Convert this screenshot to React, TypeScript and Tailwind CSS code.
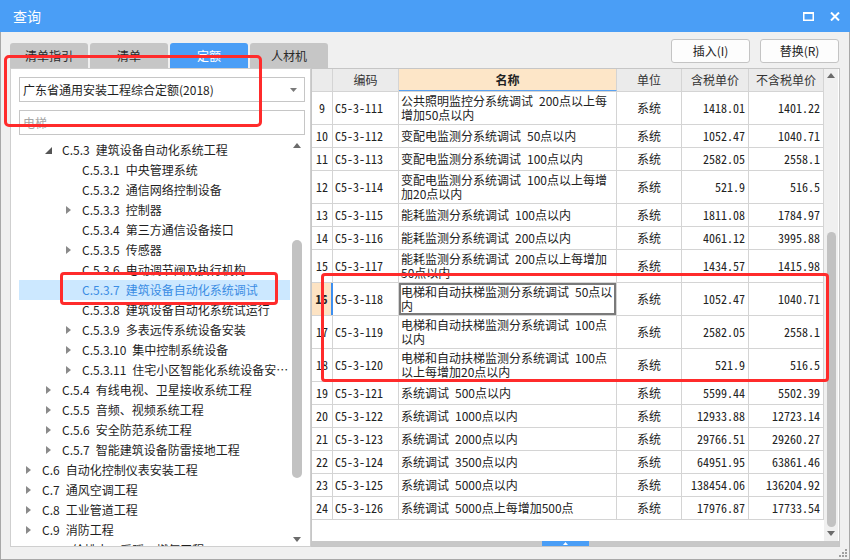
import React from "react";

type Row = {
  n: number;
  code: string;
  name: string[];
  tax: string;
  net: string;
  active?: boolean;
};

const ROWS: Row[] = [
  { n: 9, code: "C5-3-111", name: ["公共照明监控分系统调试 200点以上每", "增加50点以内"], tax: "1418.01", net: "1401.22" },
  { n: 10, code: "C5-3-112", name: ["变配电监测分系统调试 50点以内"], tax: "1052.47", net: "1040.71" },
  { n: 11, code: "C5-3-113", name: ["变配电监测分系统调试 100点以内"], tax: "2582.05", net: "2558.1" },
  { n: 12, code: "C5-3-114", name: ["变配电监测分系统调试 100点以上每增", "加20点以内"], tax: "521.9", net: "516.5" },
  { n: 13, code: "C5-3-115", name: ["能耗监测分系统调试 100点以内"], tax: "1811.08", net: "1784.97" },
  { n: 14, code: "C5-3-116", name: ["能耗监测分系统调试 200点以内"], tax: "4061.12", net: "3995.88" },
  { n: 15, code: "C5-3-117", name: ["能耗监测分系统调试 200点以上每增加", "50点以内"], tax: "1434.57", net: "1415.98" },
  { n: 16, code: "C5-3-118", name: ["电梯和自动扶梯监测分系统调试 50点以", "内"], tax: "1052.47", net: "1040.71", active: true },
  { n: 17, code: "C5-3-119", name: ["电梯和自动扶梯监测分系统调试 100点", "以内"], tax: "2582.05", net: "2558.1" },
  { n: 18, code: "C5-3-120", name: ["电梯和自动扶梯监测分系统调试 100点", "以上每增加20点以内"], tax: "521.9", net: "516.5" },
  { n: 19, code: "C5-3-121", name: ["系统调试 500点以内"], tax: "5599.44", net: "5502.39" },
  { n: 20, code: "C5-3-122", name: ["系统调试 1000点以内"], tax: "12933.88", net: "12723.14" },
  { n: 21, code: "C5-3-123", name: ["系统调试 2000点以内"], tax: "29766.51", net: "29260.27" },
  { n: 22, code: "C5-3-124", name: ["系统调试 3500点以内"], tax: "64951.95", net: "63861.46" },
  { n: 23, code: "C5-3-125", name: ["系统调试 5000点以内"], tax: "138454.06", net: "136204.92" },
  { n: 24, code: "C5-3-126", name: ["系统调试 5000点上每增加500点"], tax: "17976.87", net: "17733.54" },
];

// level: 1..3, arrow: none | closed | open
const TREE: { level: number; arrow: "none" | "closed" | "open"; no: string; text: string; selected?: boolean }[] = [
  { level: 2, arrow: "open", no: "C.5.3", text: "建筑设备自动化系统工程" },
  { level: 3, arrow: "none", no: "C.5.3.1", text: "中央管理系统" },
  { level: 3, arrow: "none", no: "C.5.3.2", text: "通信网络控制设备" },
  { level: 3, arrow: "closed", no: "C.5.3.3", text: "控制器" },
  { level: 3, arrow: "none", no: "C.5.3.4", text: "第三方通信设备接口" },
  { level: 3, arrow: "closed", no: "C.5.3.5", text: "传感器" },
  { level: 3, arrow: "none", no: "C.5.3.6", text: "电动调节阀及执行机构" },
  { level: 3, arrow: "none", no: "C.5.3.7", text: "建筑设备自动化系统调试", selected: true },
  { level: 3, arrow: "none", no: "C.5.3.8", text: "建筑设备自动化系统试运行" },
  { level: 3, arrow: "closed", no: "C.5.3.9", text: "多表远传系统设备安装" },
  { level: 3, arrow: "closed", no: "C.5.3.10", text: "集中控制系统设备" },
  { level: 3, arrow: "closed", no: "C.5.3.11", text: "住宅小区智能化系统设备安装工程" },
  { level: 2, arrow: "closed", no: "C.5.4", text: "有线电视、卫星接收系统工程" },
  { level: 2, arrow: "closed", no: "C.5.5", text: "音频、视频系统工程" },
  { level: 2, arrow: "closed", no: "C.5.6", text: "安全防范系统工程" },
  { level: 2, arrow: "closed", no: "C.5.7", text: "智能建筑设备防雷接地工程" },
  { level: 1, arrow: "closed", no: "C.6", text: "自动化控制仪表安装工程" },
  { level: 1, arrow: "closed", no: "C.7", text: "通风空调工程" },
  { level: 1, arrow: "closed", no: "C.8", text: "工业管道工程" },
  { level: 1, arrow: "closed", no: "C.9", text: "消防工程" },
  { level: 1, arrow: "closed", no: "C.10", text: "给排水、采暖、燃气工程" },
];

const MONO = "font-['Noto_Sans_Mono_CJK_SC','Liberation_Mono',monospace]";

// the original uses a wide gap between the text and the point counts
const wide = (s: string) => s.replace(" ", "\u2002");

const UpArrow = () => (
  <svg width="8" height="5" viewBox="0 0 8 5">
    <polygon points="0,5 4,0 8,5" fill="#6b6b6b" />
  </svg>
);
const DownArrow = () => (
  <svg width="8" height="5" viewBox="0 0 8 5">
    <polygon points="0,0 8,0 4,5" fill="#6b6b6b" />
  </svg>
);

const TreeArrow = ({ kind }: { kind: "none" | "closed" | "open" }) => {
  if (kind === "closed")
    return (
      <svg width="5" height="8" viewBox="0 0 5 8">
        <polygon points="0,0 5,4 0,8" fill="#8a8a8a" />
      </svg>
    );
  if (kind === "open")
    return (
      <svg width="7" height="7" viewBox="0 0 7 7">
        <polygon points="7,0 7,7 0,7" fill="#555555" />
      </svg>
    );
  return null;
};

const Tab = ({ label, active }: { label: string; active?: boolean }) => (
  <div
    className={`w-[78px] h-[25px] rounded-t-[3px] flex items-center justify-center text-[12px] ${
      active ? "bg-[#4a9ef6] text-white" : "bg-[#c6c6c6] text-[#2a2a2a]"
    }`}
  >
    {label}
  </div>
);

const Button = ({ label }: { label: string }) => (
  <div className="w-[79px] h-[24px] rounded-[3px] border border-[#c4c4c4] bg-[#fdfdfd] flex items-center justify-center text-[12px] text-[#222]">
    {label}
  </div>
);

const TableRow = ({ row }: { row: Row }) => {
  const tall = row.name.length > 1;
  return (
    <div className={`flex border-b border-[#d4d4d4] ${tall ? "h-[33px]" : "h-[23px]"}`}>
      <div
        className={`w-[21px] shrink-0 flex items-center justify-center ${MONO} text-[12px] ${
          row.active
            ? "bg-[#fde3c3] font-bold border-r-2 border-r-[#3d8ff0]"
            : "border-r border-[#d4d4d4]"
        }`}
      >
        {row.n}
      </div>
      <div className={`w-[66px] shrink-0 border-r border-[#d4d4d4] flex items-center pl-[2px] ${MONO} text-[12px]`}>
        {row.code}
      </div>
      <div
        className={`w-[218px] shrink-0 border-r border-[#d4d4d4] flex flex-col justify-center pl-[2px] text-[12px] leading-[14px] ${
          row.active ? "ring-2 ring-inset ring-[#7a7a7a]" : ""
        }`}
      >
        {row.name.map((l, i) => (
          <div key={i} className="whitespace-nowrap">
            {wide(l)}
          </div>
        ))}
      </div>
      <div className="w-[65px] shrink-0 border-r border-[#d4d4d4] flex items-center justify-center text-[12px]">
        系统
      </div>
      <div className={`w-[67px] shrink-0 border-r border-[#d4d4d4] flex items-center justify-end pr-[3px] ${MONO} text-[12px]`}>
        {row.tax}
      </div>
      <div className={`w-[75px] shrink-0 border-r border-[#d4d4d4] flex items-center justify-end pr-[3px] ${MONO} text-[12px]`}>
        {row.net}
      </div>
    </div>
  );
};

export default function App() {
  return (
    <div className="relative w-[850px] h-[560px] overflow-hidden bg-[#f0f0f0] font-['Noto_Sans_CJK_SC',sans-serif] text-[12px] text-[#222]">
      {/* Title bar */}
      <div className="h-[32px] bg-[#4a9ef6] flex items-center pl-[13px] pr-[10px]">
        <span className="text-white text-[14px]">查询</span>
        <div className="ml-auto flex items-center gap-[16px]">
          <svg width="11" height="9" viewBox="0 0 11 9">
            <rect x="0.75" y="1" width="9.5" height="7.25" fill="none" stroke="white" strokeWidth="1.5" />
            <rect x="0" y="0" width="11" height="2" fill="white" />
          </svg>
          <svg width="10" height="9" viewBox="0 0 10 9">
            <path d="M1 0.5 L9 8.5 M9 0.5 L1 8.5" stroke="white" strokeWidth="2" />
          </svg>
        </div>
      </div>

      <div className="h-[528px] border-x border-b border-[#a8a8a8] flex flex-col">
        {/* Tabs and buttons */}
        <div className="h-[36px] flex pl-[9px] pr-[10px]">
          <div className="flex gap-[2px] self-end">
            <Tab label="清单指引" />
            <Tab label="清单" />
            <Tab label="定额" active />
            <Tab label="人材机" />
          </div>
          <div className="ml-auto flex gap-[10px] mt-[7px]">
            <Button label="插入(I)" />
            <Button label="替换(R)" />
          </div>
        </div>

        <div className="flex pl-[9px] h-[479px]">
          {/* Left panel */}
          <div className="w-[301px] h-full border border-[#cfcfcf] bg-white flex flex-col pt-[8px] pl-[8px] pr-[5px]">
            <div className="h-[25px] border border-[#c6c6c6] flex items-center pl-[3px] pr-[7px]">
              <span className="text-[12px] text-[#1e1e1e]">广东省通用安装工程综合定额(2018)</span>
              <svg className="ml-auto" width="7" height="4" viewBox="0 0 7 4">
                <polygon points="0,0 7,0 3.5,4" fill="#7a7a7a" />
              </svg>
            </div>
            <div className="h-[25px] mt-[8px] border border-[#c6c6c6] flex items-center pl-[3px]">
              <span className="text-[12px] text-[#a6a6a6]">电梯</span>
            </div>
            <div className="flex-1 mt-[5px] flex overflow-hidden">
              <div className="w-[271px] flex flex-col">
                {TREE.map((t, i) => (
                  <div
                    key={i}
                    className={`h-[20px] shrink-0 flex items-center ${
                      t.selected ? "bg-[#cce8ff] text-[#3b8de4]" : "text-[#1f1f1f]"
                    } ${t.level === 1 ? "pl-[4px]" : t.level === 2 ? "pl-[24px]" : "pl-[44px]"}`}
                  >
                    <div className="w-[10px] shrink-0 flex items-center justify-center">
                      <TreeArrow kind={t.arrow} />
                    </div>
                    <span className="ml-[9px] whitespace-nowrap overflow-hidden text-ellipsis text-[12px] leading-[20px]">
                      {t.no}
                      {"\u2002"}
                      {t.text}
                    </span>
                  </div>
                ))}
              </div>
              <div className="w-[14px] flex flex-col items-center">
                <div className="h-[10px] flex items-center justify-center">
                  <UpArrow />
                </div>
                <div className="mt-[90px] w-[10px] h-[238px] rounded-full bg-[#c2c2c2]" />
                <div className="mt-auto mb-[2px] h-[10px] flex items-center justify-center">
                  <DownArrow />
                </div>
              </div>
            </div>
          </div>

          {/* Table panel */}
          <div className="w-[529px] h-full border border-[#c6c6c6] bg-white flex flex-col">
            <div className="h-[472px] flex">
              <div className="w-[512px] flex flex-col">
                <div className="h-[23px] flex border-b border-[#d4d4d4] bg-[#ebebeb] text-[12px] text-[#333]">
                  <div className="w-[21px] border-r border-[#d4d4d4]" />
                  <div className="w-[66px] border-r border-[#d4d4d4] flex items-center justify-center">编码</div>
                  <div className="w-[218px] border-r border-[#d4d4d4] border-b border-b-[#5aa2f2] bg-[#fde6c8] flex items-center justify-center font-bold text-[#222]">
                    名称
                  </div>
                  <div className="w-[65px] border-r border-[#d4d4d4] flex items-center justify-center">单位</div>
                  <div className="w-[67px] border-r border-[#d4d4d4] flex items-center justify-center">含税单价</div>
                  <div className="w-[75px] border-r border-[#d4d4d4] flex items-center justify-center">不含税单价</div>
                </div>
                {ROWS.map((r) => (
                  <TableRow key={r.n} row={r} />
                ))}
              </div>
              <div className="w-[14px] bg-[#f0f0f0] flex flex-col items-center">
                <div className="h-[12px] flex items-center justify-center">
                  <UpArrow />
                </div>
                <div className="mt-[151px] w-[9px] h-[295px] rounded-full bg-[#c2c2c2]" />
                <div className="h-[12px] flex items-center justify-center">
                  <DownArrow />
                </div>
              </div>
            </div>
            <div className="h-[5px] bg-[#c8c8c8] flex">
              <div className="ml-[230px] w-[47px] h-full bg-[#4a9ef6] flex items-center justify-center">
                <svg width="5" height="3" viewBox="0 0 5 3">
                  <polygon points="0,3 2.5,0 5,3" fill="white" />
                </svg>
              </div>
            </div>
          </div>
        </div>
      </div>

      {/* Resize grip */}
      <svg className="absolute right-[3px] bottom-[3px]" width="9" height="9" viewBox="0 0 9 9">
        <rect x="7" y="1" width="2" height="2" fill="#a0a0a0" />
        <rect x="4" y="4" width="2" height="2" fill="#a0a0a0" />
        <rect x="7" y="4" width="2" height="2" fill="#a0a0a0" />
        <rect x="1" y="7" width="2" height="2" fill="#a0a0a0" />
        <rect x="4" y="7" width="2" height="2" fill="#a0a0a0" />
        <rect x="7" y="7" width="2" height="2" fill="#a0a0a0" />
      </svg>

      {/* Red annotation boxes */}
      <div className="absolute left-[4px] top-[55px] w-[258px] h-[72px] border-[3px] border-[#ff2b2b] rounded-[5px]" />
      <div className="absolute left-[60px] top-[272px] w-[218px] h-[33px] border-[3px] border-[#ff2b2b] rounded-[4px]" />
      <div className="absolute left-[321px] top-[273px] w-[508px] h-[109px] border-[3px] border-[#ff2b2b] rounded-[4px]" />
    </div>
  );
}
